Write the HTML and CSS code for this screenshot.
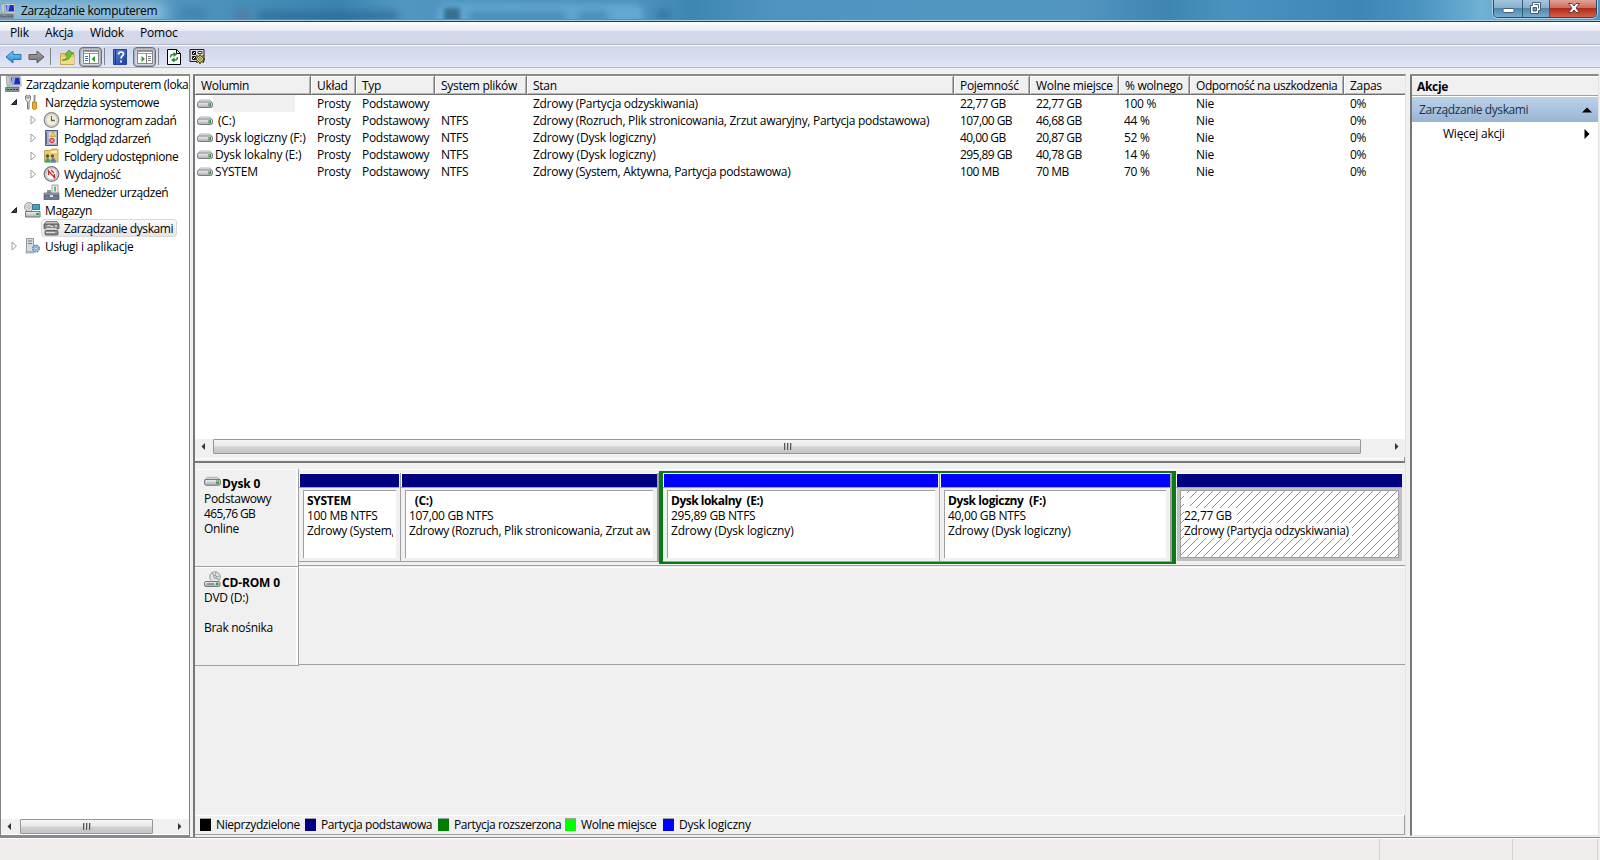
FILE: index.html
```html
<!DOCTYPE html>
<html lang="pl">
<head>
<meta charset="utf-8">
<title>Zarządzanie komputerem</title>
<link rel="stylesheet" href="styles.css">
</head>
<body>
<svg class="defs" width="0" height="0">
  <defs>
    <linearGradient id="gMetal" x1="0" y1="0" x2="0" y2="1"><stop offset="0" stop-color="#f4f4f6"/><stop offset="1" stop-color="#a9abb2"/></linearGradient>
    <linearGradient id="gBlue" x1="0" y1="0" x2="0" y2="1"><stop offset="0" stop-color="#7fd0f5"/><stop offset="1" stop-color="#1f86cf"/></linearGradient>
    <linearGradient id="gGrey" x1="0" y1="0" x2="0" y2="1"><stop offset="0" stop-color="#a8a8a8"/><stop offset="1" stop-color="#6e6e6e"/></linearGradient>
    <linearGradient id="gHelp" x1="0" y1="0" x2="1" y2="1"><stop offset="0" stop-color="#5c86dc"/><stop offset="1" stop-color="#1c3c9c"/></linearGradient>
    <pattern id="hatch" width="8" height="8" patternUnits="userSpaceOnUse"><path d="M-1 9L9 -1M-1 1L1 -1M7 9L9 7" stroke="#8f8f8f" stroke-width="1"/></pattern>
    <symbol id="drive" viewBox="0 0 16 10"><path d="M3 1h10l2.500 3.500H.5z" fill="#e9e9ec" stroke="#a2a4a9" stroke-width=".8"/><rect x=".5" y="3" width="15" height="5.500" rx="1.800" fill="url(#gMetal)" stroke="#787a80"/><rect x="11.500" y="4" width="2.500" height="3.200" fill="#37933c"/><path d="M12 4.500h1v1h-1z" fill="#a5e59a"/></symbol>
    <symbol id="computer" viewBox="0 0 17 16"><path d="M1 1l4-1v10H2z" fill="#c6cbd2" stroke="#888" stroke-width=".6"/><path d="M5 .5h10.500l.8 9.500H6z" fill="#e4e4de" stroke="#a8a8a0" stroke-width=".8"/><path d="M6 1.500h8.500l.7 7H7z" fill="#182fc0"/><path d="M7 1.500h3.500L9 8.500H7z" fill="#8ca4f4"/><path d="M2 10h12l1 2H1z" fill="#b8bcc2"/><path d="M.5 11.500h13.500v4H.5z" fill="#8b9098" stroke="#5c626a" stroke-width=".7"/><path d="M2 13.500h2m1 0h2m1 0h2m1 0h2" stroke="#333b44"/><path d="M3 12.500h3" stroke="#6c6"/></symbol>
    <symbol id="openArrow" viewBox="0 0 8 8"><path d="M1.500 6.500h5v-5z" fill="#404040" stroke="#202020"/></symbol>
    <symbol id="closedArrow" viewBox="0 0 8 10"><path d="M2 1l4.500 4L2 9z" fill="#fff" stroke="#a0a0a0"/></symbol>
  </defs>
</svg>
<div class="window">
  <header class="titlebar">
    <div class="glass">
      <i class="blob b1"></i><i class="blob b2"></i><i class="blob b3"></i><i class="blob b4"></i><i class="blob b5"></i><i class="blob b6"></i><i class="blob b7"></i><i class="blob b8"></i><i class="blob glow"></i>
    </div>
    <svg class="app-icon" width="16" height="16"><use href="#computer"/></svg>
    <span class="title">Zarządzanie komputerem</span>
    <div class="winbtns">
      <span class="wb"><svg width="28" height="17"><rect x="9" y="8.500" width="11" height="4" rx="1" fill="#fff" stroke="#4b5c6e"/></svg></span>
      <span class="wb"><svg width="26" height="17"><path d="M9.500 2.500h8v8h-2v3h-8v-8h2z" fill="#fff" stroke="#4b5c6e"/><path d="M10 7.500h3.500v3.500h-3.500z" fill="#6d9bbd" stroke="#4b5c6e"/><path d="M11.500 4.500h4v4" fill="none" stroke="#4b5c6e"/></svg></span>
      <span class="wb close"><svg width="46" height="17"><path d="M18.500 3.500h3.500l2 2.500 2-2.500h3.500L26 8l3.500 4.500H26L24 10l-2 2.500h-3.500L22 8z" fill="#fff" stroke="#5a3030" stroke-width=".9"/></svg></span>
    </div>
  </header>
  <nav class="menu"><span class="m1">Plik</span><span class="m2">Akcja</span><span class="m3">Widok</span><span class="m4">Pomoc</span></nav>
  <div class="toolbar">
    <svg class="t-back" width="17" height="14"><path d="M1 7l7-6v3.500h8v5H8V13z" fill="url(#gBlue)" stroke="#2674b4"/></svg>
    <svg class="t-fwd" width="17" height="14"><path d="M16 7L9 1v3.500H1v5h8V13z" fill="url(#gGrey)" stroke="#5c5c5c"/></svg>
    <i class="sep s1"></i>
    <svg class="t-up" width="15" height="16"><path d="M.5 4.500h5l1-1h7.500v12H.5z" fill="#ecc765" stroke="#c39a3c" stroke-width=".8"/><path d="M1 8h13v7H1z" fill="#f4d987"/><path d="M2 11c4 0 5-3 5-5H5l4-5 4.500 4H11c0 4-3 7-9 6z" fill="#6fc03c" stroke="#3e8d20" stroke-width=".7"/></svg>
    <span class="pressed p1"><svg width="16" height="14"><path d="M.5.5h15v13H.5z" fill="#fff" stroke="#858585"/><path d="M1 1.500h14M1 3.500h14" stroke="#9a9a9a"/><path d="M6.500 4v9" stroke="#777"/><path d="M2 6.500h3M2 8.500h3M2 10.500h3" stroke="#4474bd"/><path d="M12 6v6L8.500 9z" fill="#2c9a2c"/></svg></span>
    <i class="sep s2"></i>
    <svg class="t-help" width="14" height="16"><path d="M.5.5h13v15H.5z" fill="url(#gHelp)" stroke="#2a4598"/><path d="M2.500 1v14" stroke="#1b3588"/><path d="M5.500 5.500c0-3.500 5-3 5-.5 0 2-2.500 2-2.500 4.500M8 11.500v2" fill="none" stroke="#fff" stroke-width="1.700"/></svg>
    <span class="pressed p2"><svg width="16" height="14"><path d="M.5.5h15v13H.5z" fill="#fff" stroke="#858585"/><path d="M1 1.500h14M1 3.500h14" stroke="#9a9a9a"/><path d="M9.500 4v9" stroke="#777"/><path d="M11 6.500h3M11 8.500h3M11 10.500h3" stroke="#777"/><path d="M4.500 6v6L8 9z" fill="#2c9a2c"/></svg></span>
    <i class="sep s3"></i>
    <svg class="t-ref" width="14" height="16"><path d="M.5.5h9l4 4v11H.5z" fill="#fff" stroke="#000"/><path d="M9.500.5v4h4" fill="none" stroke="#000"/><path d="M3.500 8.500c0-2.500 1.500-3.500 4-3M10.500 8c0 2.500-1.500 3.500-4 3" fill="none" stroke="#1c8a2c" stroke-width="1.400"/><path d="M6.500 3l3.500 2.500L6.500 8zM7.500 8.500L4 11l3.500 2.500z" fill="#1c8a2c"/></svg>
    <svg class="t-prop" width="17" height="16"><path d="M1 .5h14v12H1z" fill="#dcdcdc" stroke="#222"/><path d="M3.500 2.500h3v3h-3zM3.500 7.500h3v3h-3z" fill="#fff" stroke="#111"/><path d="M4 3l2 2M4 8l2 2" stroke="#111"/><path d="M9 2.500h4v2H9z" fill="#fff" stroke="#111" stroke-width=".8"/><path d="M11 5.500l1 2 2.500-1-.8 2.500 2.300 1-2.300 1 .8 2.500-2.500-.8-1 2.300-1-2.300-2.500.8.8-2.500-2.300-1 2.300-1-.8-2.500 2.500 1z" fill="#f0dc28" stroke="#222" stroke-width=".8"/><circle cx="11" cy="10" r="1.300" fill="#fff" stroke="#333" stroke-width=".7"/></svg>
  </div>
  <main class="body">
    <aside class="tree">
      <ul>
        <li class="l0"><svg class="ic" width="17" height="16"><use href="#computer"/></svg><span>Zarządzanie komputerem (loka</span></li>
        <li class="l1"><svg class="ex" width="8" height="8"><use href="#openArrow"/></svg><svg class="ic" width="17" height="16"><path d="M3.500 15V8L1.500 5.500V2l1.500-1v3h2V1l1.500 1v3.500L5 8v7z" fill="#e4e6e9" stroke="#777c83"/><path d="M10.500 1v7" stroke="#8a8e95" stroke-width="1.800"/><path d="M8.500 8h4v6c0 2-4 2-4 0z" fill="#eaae23" stroke="#b27a10" stroke-width=".8"/></svg><span>Narzędzia systemowe</span></li>
        <li class="l2"><svg class="ex" width="8" height="10"><use href="#closedArrow"/></svg><svg class="ic" width="17" height="16"><circle cx="8.500" cy="8" r="7.300" fill="#e9e2cb" stroke="#8a8d92" stroke-width="1.300"/><circle cx="8.500" cy="8" r="5.500" fill="#f6efd5" stroke="#c2c2c2" stroke-width=".7"/><path d="M8.500 4v4.500H12" fill="none" stroke="#5a6c88" stroke-width="1.300"/></svg><span>Harmonogram zadań</span></li>
        <li class="l2"><svg class="ex" width="8" height="10"><use href="#closedArrow"/></svg><svg class="ic" width="17" height="16"><path d="M2.500.5h12v15h-12z" fill="#a6b4d0" stroke="#45577e"/><path d="M2 2h2v12H2z" fill="#5c6c90"/><path d="M6 2.500h7v11H6z" fill="#dfe5f0"/><path d="M10 2l3 4.500H7z" fill="#f5ce34" stroke="#b88c14" stroke-width=".6"/><circle cx="9" cy="10.500" r="2.800" fill="#d54848"/><path d="M8 9.500l2 2m0-2l-2 2" stroke="#fff"/></svg><span>Podgląd zdarzeń</span></li>
        <li class="l2"><svg class="ex" width="8" height="10"><use href="#closedArrow"/></svg><svg class="ic" width="17" height="16"><path d="M1.500 2.500h6l1-1.500h6.500v13H1.500z" fill="#ecca6c" stroke="#bd9541" stroke-width=".8"/><path d="M8 3h6v2H8z" fill="#fff4bc"/><circle cx="4.500" cy="8" r="1.700" fill="#5b4a32"/><circle cx="9.500" cy="8" r="1.700" fill="#715338"/><path d="M2 14.500c0-6 5-6 5.500 0z" fill="#3caa64"/><path d="M7.500 14.500c0-6 5-6 5.500 0z" fill="#3c86c8"/></svg><span>Foldery udostępnione</span></li>
        <li class="l2"><svg class="ex" width="8" height="10"><use href="#closedArrow"/></svg><svg class="ic" width="17" height="16"><circle cx="8.500" cy="8" r="7.300" fill="#d8d8d8" stroke="#77797e" stroke-width="1.300"/><circle cx="8.500" cy="8" r="5.300" fill="#fff" stroke="#aaa" stroke-width=".6"/><path d="M5.500 9V5l6 6.500V8M8 4l3 3" fill="none" stroke="#c82222" stroke-width="1.300"/></svg><span>Wydajność</span></li>
        <li class="l2"><i class="ex"></i><svg class="ic" width="17" height="16"><path d="M9 1h6v9H9z" fill="#eef0f0" stroke="#8c9096" stroke-width=".8"/><path d="M12 2.500v5" stroke="#47a447" stroke-width="1.500"/><path d="M4 6h4v3H4z" fill="#8b9199"/><path d="M1 9h15v2H1z" fill="#98a4b0" stroke="#5b6670" stroke-width=".7"/><path d="M1 11.500h15v4H1z" fill="#6c7c8c" stroke="#46525e" stroke-width=".7"/><path d="M7 11h3v2H7z" fill="#d7dde2"/></svg><span>Menedżer urządzeń</span></li>
        <li class="l1"><svg class="ex" width="8" height="8"><use href="#openArrow"/></svg><svg class="ic" width="17" height="16"><circle cx="5" cy="5" r="4.500" fill="#d5d9de" stroke="#84898f" stroke-width=".8"/><circle cx="5" cy="5" r="1.300" fill="#fff" stroke="#888" stroke-width=".6"/><path d="M8.500 2.500h7v5h-7z" fill="#33a3dc" stroke="#546d7e"/><path d="M1.500 9.500h14.500v5.500H1.500z" fill="url(#gMetal)" stroke="#74777d"/><path d="M12 11h3v2h-3z" fill="#3ba03f"/></svg><span>Magazyn</span></li>
        <li class="l2 sel"><i class="ex"></i><span class="selbox"><svg class="ic" width="17" height="16"><path d="M3 1.500h11l2 3H1z" fill="#c8c8c8" stroke="#666" stroke-width=".8"/><rect x="1" y="4" width="15" height="5" rx="1" fill="#888" stroke="#4c4c4c" stroke-width=".8"/><path d="M4 6.500c1-1.500 3-1.500 4 0h2" fill="none" stroke="#eee"/><path d="M12 5h2v2h-2z" fill="#b9d7ac"/><path d="M2 9l2-1h9l2 2H2z" fill="#d5d5d5"/><rect x="2" y="10.500" width="13" height="4.500" rx="1" fill="#8e8e8e" stroke="#4c4c4c" stroke-width=".8"/><path d="M3 12.500h9" stroke="#ddd"/></svg><span>Zarządzanie dyskami</span></span></li>
        <li class="l1 wide"><svg class="ex" width="8" height="10"><use href="#closedArrow"/></svg><svg class="ic" width="17" height="16"><path d="M2.500.5h7v14h-7z" fill="#d5dbe1" stroke="#848e99" stroke-width=".9"/><path d="M4 3h4M4 5.500h4" stroke="#66788c"/><path d="M1.500 13h8v2.500h-8z" fill="#a7b2be"/><circle cx="12" cy="10.500" r="3.300" fill="#a5cbe8" stroke="#5583ab" stroke-width="1.400" stroke-dasharray="1.700 .9"/><circle cx="12" cy="10.500" r="1.200" fill="#fff" stroke="#5583ab" stroke-width=".7"/></svg><span>Usługi i aplikacje</span></li>
      </ul>
      <div class="hscroll tree-scroll">
        <svg width="19" height="15"><path d="M10 4v7L6.500 7.500z" fill="#333"/></svg>
        <div class="thumb"><i></i><i></i><i></i></div>
        <svg class="right" width="16" height="15"><path d="M5 4v7l3.500-3.500z" fill="#333"/></svg>
      </div>
    </aside>
    <section class="center">
      <div class="vol-list">
        <div class="row head"><span>Wolumin</span><span>Układ</span><span>Typ</span><span>System plików</span><span>Stan</span><span>Pojemność</span><span>Wolne miejsce</span><span>% wolnego</span><span class="tight">Odporność na uszkodzenia</span><span>Zapas</span></div>
        <div class="row"><span class="name"><svg width="16" height="10"><use href="#drive"/></svg><b class="blank"></b></span><span>Prosty</span><span>Podstawowy</span><span></span><span>Zdrowy (Partycja odzyskiwania)</span><span class="num">22,77 GB</span><span class="num">22,77 GB</span><span class="pct">100 %</span><span>Nie</span><span>0%</span></div>
        <div class="row"><span class="name"><svg width="16" height="10"><use href="#drive"/></svg>&nbsp;(C:)</span><span>Prosty</span><span>Podstawowy</span><span>NTFS</span><span>Zdrowy (Rozruch, Plik stronicowania, Zrzut awaryjny, Partycja podstawowa)</span><span class="num">107,00 GB</span><span class="num">46,68 GB</span><span class="pct">44 %</span><span>Nie</span><span>0%</span></div>
        <div class="row"><span class="name"><svg width="16" height="10"><use href="#drive"/></svg>Dysk logiczny (F:)</span><span>Prosty</span><span>Podstawowy</span><span>NTFS</span><span class="loose">Zdrowy (Dysk logiczny)</span><span class="num">40,00 GB</span><span class="num">20,87 GB</span><span class="pct">52 %</span><span>Nie</span><span>0%</span></div>
        <div class="row"><span class="name"><svg width="16" height="10"><use href="#drive"/></svg>Dysk lokalny (E:)</span><span>Prosty</span><span>Podstawowy</span><span>NTFS</span><span class="loose">Zdrowy (Dysk logiczny)</span><span class="num">295,89 GB</span><span class="num">40,78 GB</span><span class="pct">14 %</span><span>Nie</span><span>0%</span></div>
        <div class="row"><span class="name"><svg width="16" height="10"><use href="#drive"/></svg>SYSTEM</span><span>Prosty</span><span>Podstawowy</span><span>NTFS</span><span>Zdrowy (System, Aktywna, Partycja podstawowa)</span><span class="num">100 MB</span><span class="num">70 MB</span><span class="pct">70 %</span><span>Nie</span><span>0%</span></div>
      </div>
      <div class="hscroll list-scroll">
        <svg width="18" height="15"><path d="M10 4v7L6.500 7.500z" fill="#333"/></svg>
        <div class="thumb"><i></i><i></i><i></i></div>
        <svg class="right" width="19" height="15"><path d="M9 4v7l3.500-3.500z" fill="#333"/></svg>
      </div>
      <div class="splitter"></div>
      <div class="disk">
        <div class="label"><div class="dname"><svg width="17" height="11" viewBox="0 0 16 10"><use href="#drive"/></svg>Dysk 0</div><div>Podstawowy</div><div class="size">465,76 GB</div><div>Online</div></div>
        <div class="parts">
          <div class="part pa"><div class="bar"></div><div class="box"><b>SYSTEM</b><span>100 MB NTFS</span><span>Zdrowy (System,</span></div></div>
          <div class="part pb"><div class="bar"></div><div class="box"><b>&nbsp;&nbsp;(C:)</b><span>107,00 GB NTFS</span><span>Zdrowy (Rozruch, Plik stronicowania, Zrzut aw</span></div></div>
          <div class="extended">
            <div class="part logical pc"><div class="bar"></div><div class="box"><b>Dysk lokalny&nbsp; (E:)</b><span>295,89 GB NTFS</span><span class="loose">Zdrowy (Dysk logiczny)</span></div></div>
            <div class="part logical pd"><div class="bar"></div><div class="box"><b>Dysk logiczny&nbsp; (F:)</b><span>40,00 GB NTFS</span><span class="loose">Zdrowy (Dysk logiczny)</span></div></div>
          </div>
          <div class="part pe"><div class="bar"></div><div class="box"><svg class="hatch" width="218" height="67"><rect width="218" height="67" fill="url(#hatch)"/></svg><b><em>&nbsp;&nbsp;</em></b><span><em>22,77 GB&nbsp;&nbsp;</em></span><span><em>Zdrowy (Partycja odzyskiwania)&nbsp;</em></span></div></div>
        </div>
      </div>
      <div class="disk cd">
        <div class="label"><div class="dname"><svg width="17" height="17"><circle cx="11" cy="6" r="5.300" fill="#dde2e2" stroke="#8a8d92" stroke-width=".8"/><path d="M11 6L8 1.800M11 6l4 3" stroke="#c58ad0" stroke-width="1.200"/><path d="M11 6l1-5M11 6l5-1" stroke="#7fc78a" stroke-width="1.200"/><circle cx="11" cy="6" r="1.300" fill="#fff" stroke="#777" stroke-width=".7"/><path d="M3 9.500h11l2 2H1z" fill="#ebebec"/><rect x=".5" y="10.500" width="15.500" height="5" rx="1.500" fill="url(#gMetal)" stroke="#75777c"/><path d="M3 13h7" stroke="#555"/><path d="M12 11.500h2.500v2.500H12z" fill="#3ba03f"/></svg>CD-ROM 0</div><div>DVD (D:)</div><div>&nbsp;</div><div>Brak nośnika</div></div>
        <div class="parts"></div>
      </div>
      <div class="void"></div>
      <div class="legend"><span class="g1"><i></i>Nieprzydzielone</span><span class="g2"><i></i>Partycja podstawowa</span><span class="g3"><i></i>Partycja rozszerzona</span><span class="g4"><i></i>Wolne miejsce</span><span class="g5"><i></i>Dysk logiczny</span></div>
    </section>
    <aside class="actions">
      <h2>Akcje</h2>
      <div class="act-title"><span>Zarządzanie dyskami</span><svg width="10" height="6"><path d="M0 5.500L5 .5l5 5z" fill="#000"/></svg></div>
      <div class="act-more"><span>Więcej akcji</span><svg width="6" height="10"><path d="M.5 0v10l5-5z" fill="#000"/></svg></div>
    </aside>
  </main>
  <footer class="status"><span></span><span></span><span></span></footer>
</div>
</body>
</html>
```
FILE: styles.css
```css
* { box-sizing: border-box; }
body { margin: 0; background: #f0f0f0; color: #000; font: 12px/15px "Open Sans", "Noto Sans", sans-serif; letter-spacing: -0.3px; }
svg { display: block; flex: none; }
.defs { position: absolute; }
.window { width: 1600px; height: 860px; display: flex; flex-direction: column; overflow: hidden; white-space: nowrap; }

/* title bar */
.titlebar { position: relative; flex: none; height: 22px; display: flex; align-items: center; background: linear-gradient(90deg, #5f9fc4 0, #4d93be 200px, #3b83b1 340px, #5196c1 400px, #4a90bd 650px, #3d86b3 690px, #5095c2 780px, #5295c1 1080px, #3e85b2 1170px, #4a93c1 1230px, #3e86b5 1360px, #4b94c2 1420px, #6fb0d4 1480px, #5294bd 1600px); border-bottom: 1px solid #26394d; box-shadow: inset 0 -1px #a6cde4; }
.glass { position: absolute; inset: 0 0 2px; overflow: hidden; }
.blob { position: absolute; filter: blur(4px); }
.glow { left: -10px; top: 2px; width: 175px; height: 20px; background: #bcdcee; opacity: .6; filter: blur(7px); }
.b1 { left: 180px; top: 8px; width: 26px; height: 12px; background: #2f6c93; opacity: .4; }
.b2 { left: 235px; top: 11px; width: 14px; height: 8px; background: #6b5a7a; opacity: .5; }
.b3 { left: 258px; top: 12px; width: 140px; height: 9px; background: #245f87; opacity: .65; }
.b4 { left: 438px; top: 4px; width: 205px; height: 30px; border-radius: 8px; background: #63a8d3; filter: blur(3px); }
.b5 { left: 444px; top: 8px; width: 16px; height: 14px; background: #2d6280; opacity: .8; filter: blur(2px); }
.b6 { left: 468px; top: 12px; width: 98px; height: 9px; background: #33759f; opacity: .65; }
.b7 { left: 578px; top: 12px; width: 30px; height: 9px; background: #33759f; opacity: .65; }
.b8 { left: 658px; top: 11px; width: 10px; height: 9px; background: #2b688f; opacity: .8; }
.app-icon { position: relative; }
.title { position: relative; margin-left: 5px; letter-spacing: -0.34px; }
.winbtns { position: relative; align-self: flex-start; margin-left: auto; margin-right: 3px; height: 18px; display: flex; border: 1px solid #2d4c63; border-top: 0; border-radius: 0 0 5px 5px; overflow: hidden; box-shadow: 0 0 0 1px #a9cfe5; }
.wb { background: linear-gradient(#a4c7de 0, #85b0cc 45%, #4f86ab 50%, #76aed0 100%); border-right: 1px solid #345a74; }
.close { border: 0; background: linear-gradient(#e0a297 0, #cf6c5c 45%, #b02b1a 50%, #d2614a 100%); }

/* menu and toolbar */
.menu { flex: none; height: 24px; display: flex; padding: 3px 0 0 10px; border-bottom: 1px solid #fff; background: linear-gradient(#fff 0, #e6eaf4 9px, #d3d8eb 9px, #d3d8eb 22px, #aeb3c3 22px); letter-spacing: -0.2px; }
.m1 { width: 35px; } .m2 { width: 45px; } .m3 { width: 50px; }
.toolbar { flex: none; height: 22px; display: flex; align-items: center; padding-left: 5px; background: linear-gradient(#d3d8eb 20%, #e0e6f6); border-bottom: 1px solid #b3b9cb; }
.t-fwd { margin-left: 6px; }
.sep { width: 1px; height: 17px; background: #80858f; }
.s1 { margin-left: 5px; } .s2 { margin-left: 2px; } .s3 { margin-left: 2px; }
.t-up { margin-left: 9px; }
.pressed { width: 23px; height: 20px; display: flex; align-items: center; justify-content: center; border: 1px solid #6d7078; border-radius: 4px; background: linear-gradient(#c3c7d3, #dde1ec); box-shadow: inset 0 0 1px 1px #a3a7b1; }
.p1 { margin-left: 4px; }
.t-help { margin-left: 8px; }
.p2 { margin-left: 6px; }
.t-ref { margin-left: 8px; }
.t-prop { margin-left: 8px; }

/* panes */
.body { flex: none; height: 770px; display: flex; padding-top: 6px; }
.tree { width: 190px; height: 763px; display: flex; flex-direction: column; background: #fff; border: 1px solid #828282; border-top: 2px solid #8a8a8a; border-bottom: 2px solid #8a8a8a; overflow: hidden; letter-spacing: -0.4px; }
.tree ul { flex: 1; list-style: none; margin: -1px 0 0; padding: 0; }
.tree li { height: 18px; display: flex; align-items: center; }
.l0 { padding-left: 4px; } .l0 .ic { margin-right: 4px; }
.l1 { padding-left: 9px; } .l1 .ic { margin: 0 4px 0 6px; }
.l2 { padding-left: 28px; } .l2 .ic { margin: 0 4px 0 6px; }
.wide { letter-spacing: -0.2px; }
.ex { width: 8px; flex: none; }
.selbox { height: 18px; display: flex; align-items: center; width: 136px; margin-left: 4px; border: 1px solid #d9d9d9; border-radius: 3px; background: linear-gradient(#fafafa, #e5e5e5); }
.sel .selbox .ic { margin-left: 1px; }
.hscroll { flex: none; height: 15px; display: flex; background: #f0f0f0; }
.thumb { display: flex; align-items: center; justify-content: center; gap: 2px; border: 1px solid #979797; border-radius: 1px; background: linear-gradient(#f5f5f5 0, #e9e9eb 45%, #d2d2d5 55%, #c3c3c7 100%); }
.thumb i { width: 1px; height: 7px; background: #555; box-shadow: 1px 0 #bbb; }
.tree-scroll { margin: 0 0 1px; }
.tree-scroll .thumb { width: 133px; }
.tree-scroll .right { margin-left: auto; }

.center { width: 1213px; height: 763px; margin-left: 3px; display: flex; flex-direction: column; border-left: 2px solid #777; border-top: 2px solid #8a8a8a; border-right: 1px solid #e3e3e3; background: #f0f0f0; }
.vol-list { flex: none; height: 363px; background: #fff; }
.row { display: grid; height: 17px; grid-template-columns: 116px 45px 79px 92px 427px 76px 89px 71px 154px 61px; }
.row > span { padding-left: 6px; line-height: 17px; overflow: hidden; }
.row .name { display: flex; align-items: center; padding-left: 2px; gap: 2px; letter-spacing: -0.18px; }
.row .num { letter-spacing: -0.55px; }
.row .pct { padding-left: 5px; }
.loose { letter-spacing: -0.17px; }
.blank { width: 82px; height: 17px; background: #f0f0f0; margin-left: -2px; }
.head { height: 19px; background: #f0f0f0; border-bottom: 1px solid #6e6e6e; box-shadow: inset 0 -1px #b5b5b5; }
.head > span { line-height: 20px; border-right: 1px solid #7a7a7a; box-shadow: inset 1px 1px #fff, inset -1px 0 #b0b0b0; }
.head .tight { letter-spacing: -0.42px; }
.head > span:last-child { border: 0; box-shadow: inset 1px 1px #fff; }
.list-scroll .thumb { width: 1148px; }
.list-scroll .right { margin-left: auto; }
.splitter { flex: none; height: 9px; border-bottom: 2px solid #777; box-shadow: inset 0 4px #f0f0f0, inset 0 5px #fff; border-right: 1px solid #999; clip-path: inset(3px 0 0 0); }

/* disks */
.disk { flex: none; display: flex; height: 98px; padding-top: 6px; }
.disk:not(.cd) { height: 104px; }
.label { width: 104px; height: 98px; padding: 7px 0 0 9px; border: solid #a0a0a0; border-width: 0 1px 1px 0; box-shadow: inset 0 1px #fff, inset -2px 0 #fff; }
.dname { display: flex; align-items: flex-start; gap: 1px; height: 15px; font-weight: bold; letter-spacing: -0.15px; }
.dname svg { margin-top: 0; }
.size { letter-spacing: -0.65px; }
.parts { flex: 1; height: 97px; display: flex; padding: 2px 0 0; border-bottom: 1px solid #a0a0a0; box-shadow: inset 0 1px #fff; }
.disk.cd { padding-top: 0; height: 99px; }
.cd .label { padding-top: 8px; height: 99px; }
.cd .parts { height: 98px; }
.cd .dname svg { margin-top: -4px; }
.part { flex: none; height: 89px; margin-top: 2px; padding: 0 4px; border: solid #a0a0a0; border-width: 0 1px 1px 0; }
.bar { height: 14px; margin: 0 -3px 3px -4px; background: #000080; border-left: 1px solid #fff; border-top: 1px solid #fff; box-shadow: 0 1px #a0a0c0; }
.box { position: relative; height: 68px; padding: 2px 3px 0; background: #fff; border: solid #a0a0a0; border-width: 1px 0 0 1px; overflow: hidden; }
.box b, .box span { display: block; position: relative; overflow: hidden; height: 15px; }
.pa { width: 102px; } .pb { width: 258px; border-right-width: 2px; }
.pb .bar, .pd .bar { margin-right: -4px; }
.extended { display: flex; width: 517px; height: 93px; border: solid #0c7a12; border-width: 2px 4px; }
.extended .part { margin: 0; }
.logical .bar { background: #0000ff; }
.pc { width: 277px; } .pd { width: 232px; border-right-width: 2px; }
.pc b { letter-spacing: -0.5px; } .pd b { letter-spacing: -0.38px; }
.pe { width: 226px; height: 88px; padding: 0 3px 0 4px; border: 0; background: linear-gradient(90deg, #f0f0f0 1px, #c0c0c0 1px); }
.pe .bar { margin-right: -3px; }
.pe .box { border-width: 1px; }
.hatch { position: absolute; left: 0; top: 0; }
.box em { font-style: normal; background: #fff; display: inline-block; height: 15px; }
.void { flex: 1; }
.legend { flex: none; height: 20px; margin-bottom: 2px; display: flex; align-items: center; padding: 0 0 1px 5px; border: solid #a0a0a0; border-width: 0 1px 1px 0; box-shadow: inset 0 1px #fff; letter-spacing: -0.4px; }
.legend span { display: flex; align-items: center; gap: 5px; }
.legend i { width: 11px; height: 13px; border-top: 1px solid #a0a0a0; background: #000; }
.g1 { width: 105px; } .g2 { width: 133px; } .g3 { width: 127px; } .g4 { width: 98px; }
.g5 { letter-spacing: -0.2px; }
.g2 i { background: #000080; } .g3 i { background: #008000; } .g4 i { background: #0f0; } .g5 i { background: #00f; }

/* actions */
.actions { width: 189px; height: 762px; margin-left: 4px; background: #fff; border: 1px solid #e3e3e3; border-left: 2px solid #777; border-top: 2px solid #8a8a8a; }
.actions h2 { margin: 0 0 1px; padding-left: 5px; height: 20px; line-height: 22px; font-size: 12px; background: #f0f0f0; border-bottom: 1px solid #a0a0a0; box-shadow: inset 0 1px #fff; }
.act-title { height: 25px; padding: 0 6px 0 7px; display: flex; align-items: center; justify-content: space-between; background: linear-gradient(#bcd2ea, #98b4d4); color: #1e3246; letter-spacing: -0.4px; }
.act-more { height: 23px; padding: 0 8px 0 31px; display: flex; align-items: center; justify-content: space-between; letter-spacing: -0.22px; }

.status { flex: 1; display: flex; background: #f0edec; border-top: 1px solid #fff; box-shadow: 0 -1px #8a8a8a; }
.status span:nth-child(1) { width: 1380px; border-right: 1px solid #d5d2d1; }
.status span:nth-child(2) { width: 133px; border-right: 1px solid #d5d2d1; }
.status span:nth-child(3) { width: 85px; border-right: 1px solid #d5d2d1; }
```
